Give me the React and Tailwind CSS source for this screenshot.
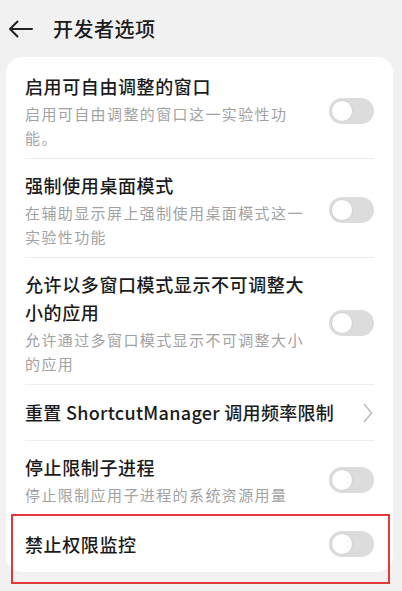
import React from 'react'

const FONT = { fontFamily: '"Noto Sans CJK SC", "Noto Sans", sans-serif' }

function Toggle() {
  return (
    <div className="w-[45px] h-[26px] rounded-full bg-[#dcdcdc] shrink-0 flex items-center pl-[2px]">
      <div className="w-[22px] h-[22px] rounded-full bg-white border border-[#d2d2d2]" />
    </div>
  )
}

function Row({ title, desc, first }) {
  return (
    <div className={`flex items-center justify-between gap-4 ${first ? 'pt-[15px]' : 'pt-[12px]'} pb-[8px] border-b border-[#ececec]`}>
      <div className="w-[288px]">
        <div className="text-[18px] leading-[28px] tracking-[0.6px] text-[#1b1b1b] font-medium">{title}</div>
        {desc && (
          <div className="mt-[2px] text-[15px] leading-[24px] tracking-[1.4px] text-[#a2a2a2]">{desc}</div>
        )}
      </div>
      <Toggle />
    </div>
  )
}

export default function App() {
  return (
    <div className="w-[402px] h-[591px] bg-[#f1f1f1] overflow-hidden relative" style={FONT}>
      <div className="h-[57px] flex items-center pl-[8px]">
        <svg width="25" height="18" viewBox="0 0 25 18" className="text-[#222]">
          <path d="M24 9H2M9.5 1.5L2 9l7.5 7.5" fill="none" stroke="currentColor" strokeWidth="2" strokeLinecap="round" strokeLinejoin="round" />
        </svg>
        <span className="ml-[20px] text-[20px] tracking-[0.5px] text-[#1b1b1b] font-medium">开发者选项</span>
      </div>

      <div className="mx-[6px] w-[387px] bg-white rounded-[16px] px-[19px]">
        <Row first title="启用可自由调整的窗口" desc="启用可自由调整的窗口这一实验性功能。" />
        <Row title="强制使用桌面模式" desc="在辅助显示屏上强制使用桌面模式这一实验性功能" />
        <Row title="允许以多窗口模式显示不可调整大小的应用" desc="允许通过多窗口模式显示不可调整大小的应用" />
        <div className="flex items-center justify-between h-[56px] border-b border-[#ececec]">
          <span className="text-[18px] tracking-[0.3px] text-[#1b1b1b] font-medium">重置 ShortcutManager 调用频率限制</span>
          <svg width="10" height="20" viewBox="0 0 10 20" className="mr-[1px] text-[#bdbdbd]">
            <path d="M1.5 1.5L8.5 10l-7 8.5" fill="none" stroke="currentColor" strokeWidth="1.6" strokeLinecap="round" strokeLinejoin="round" />
          </svg>
        </div>
        <Row title="停止限制子进程" desc="停止限制应用子进程的系统资源用量" />
        <div className="flex items-center justify-between h-[56px]">
          <span className="text-[18px] leading-[28px] tracking-[0.6px] text-[#1b1b1b] font-medium">禁止权限监控</span>
          <Toggle />
        </div>
      </div>

      <div className="absolute left-[11px] top-[514px] w-[379px] h-[70px] border-2 border-[#e5383b] pointer-events-none" />
    </div>
  )
}
